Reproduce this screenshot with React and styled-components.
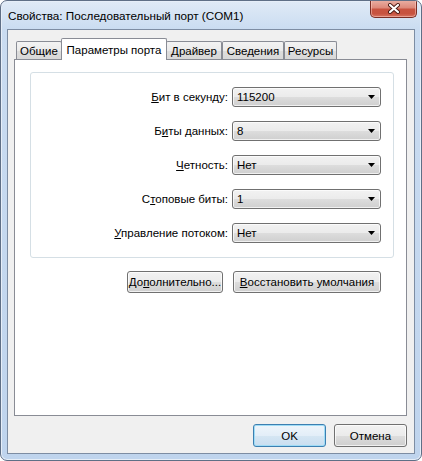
import React from 'react';
import styled, { createGlobalStyle } from 'styled-components';

const GlobalStyle = createGlobalStyle`
  html, body {
    margin: 0;
    padding: 0;
    background: #ffffff;
  }
  body {
    font-family: "Liberation Sans", Arial, sans-serif;
    font-size: 11.5px;
    color: #000000;
  }
`;

const tabs = [
  { label: 'Общие', width: 46 },
  { label: 'Параметры порта', width: 106, active: true },
  { label: 'Драйвер', width: 56 },
  { label: 'Сведения', width: 62 },
  { label: 'Ресурсы', width: 53 },
];

const settings = [
  { key: 'Б', rest: 'ит в секунду:', value: '115200' },
  { pre: 'Б', key: 'и', rest: 'ты данных:', value: '8' },
  { key: 'Ч', rest: 'етность:', value: 'Нет' },
  { pre: 'С', key: 'т', rest: 'оповые биты:', value: '1' },
  { key: 'У', rest: 'правление потоком:', value: 'Нет' },
];

const CloseIcon = () => (
  <svg width="14" height="11" viewBox="0 0 14 11">
    <path d="M3 2 L11 9 M11 2 L3 9" stroke="#4a1a14" strokeWidth="4" strokeLinecap="round" />
    <path d="M3 2 L11 9 M11 2 L3 9" stroke="#ffffff" strokeWidth="2.2" strokeLinecap="round" />
  </svg>
);

const Arrow = () => (
  <svg width="7" height="4" viewBox="0 0 7 4">
    <path d="M0 0 H7 L3.5 4 Z" fill="#000000" />
  </svg>
);

const App = () => {
  return (
    <>
      <GlobalStyle />
      <Window>
        <TitleBar>
          <Title>Свойства: Последовательный порт (COM1)</Title>
          <CloseButton>
            <CloseIcon />
          </CloseButton>
        </TitleBar>
        <Client>
          <TabStrip>
            {tabs.map((tab) => (
              <Tab key={tab.label} $active={tab.active} $width={tab.width}>
                {tab.label}
              </Tab>
            ))}
          </TabStrip>
          <Panel>
            <GroupBox>
              {settings.map((row) => (
                <React.Fragment key={row.rest}>
                  <FieldLabel>
                    {row.pre}<u>{row.key}</u>{row.rest}
                  </FieldLabel>
                  <Combo>
                    <span>{row.value}</span>
                    <Arrow />
                  </Combo>
                </React.Fragment>
              ))}
            </GroupBox>
            <PanelButtons>
              <Button $width={96}>До<u>п</u>олнительно...</Button>
              <Button $width={148}><u>В</u>осстановить умолчания</Button>
            </PanelButtons>
          </Panel>
          <DialogButtons>
            <Button $width={73} $height={23} $default>OK</Button>
            <Button $width={73} $height={23}>Отмена</Button>
          </DialogButtons>
        </Client>
      </Window>
    </>
  );
};

const Window = styled.div`
  width: 422px;
  height: 461px;
  box-sizing: border-box;
  display: flex;
  flex-direction: column;
  padding-bottom: 6px;
  border: 1px solid #5f6f86;
  border-radius: 7px;
  background: linear-gradient(180deg, #e0eaf6 0px, #cadcf1 28px, #bfd4ed 100%);
  box-shadow: inset 0 0 0 1px #e6eef8;
  overflow: hidden;
`;

const TitleBar = styled.div`
  height: 28px;
  flex: 0 0 28px;
  display: flex;
  justify-content: space-between;
  align-items: flex-start;
  padding: 0 4px 0 7px;
`;

const Title = styled.div`
  font-family: "Liberation Sans", Arial, sans-serif;
  font-size: 11.7px;
  line-height: 28px;
  color: #000000;
  margin-top: 1px;
`;

const CloseButton = styled.div`
  width: 47px;
  height: 18px;
  margin-top: -1px;
  box-sizing: border-box;
  display: flex;
  align-items: center;
  justify-content: center;
  border: 1px solid #7a2e25;
  border-top: none;
  border-radius: 0 0 5px 5px;
  background: linear-gradient(180deg, #eab1a5 0%, #dd8a7b 45%, #c85340 55%, #c7533f 80%, #d67462 100%);
  box-shadow: inset 0 0 0 1px rgba(255, 210, 200, 0.5);
`;

const Client = styled.div`
  flex: 1;
  margin: 0 6px;
  display: flex;
  flex-direction: column;
  padding: 8px 7px 0 6px;
  border: 1px solid #7d8da3;
  background: #f0f0f0;
`;

const TabStrip = styled.div`
  display: flex;
  align-items: flex-end;
  height: 21px;
  padding-left: 2px;
`;

const Tab = styled.div`
  position: relative;
  z-index: ${(props) => (props.$active ? 2 : 1)};
  box-sizing: border-box;
  width: ${(props) => props.$width}px;
  height: ${(props) => (props.$active ? 22 : 18)}px;
  margin: ${(props) => (props.$active ? '0 -1px -1px' : '0')};
  display: flex;
  align-items: center;
  justify-content: center;
  padding-top: ${(props) => (props.$active ? 0 : 1)}px;
  border: 1px solid #898c95;
  border-bottom: none;
  border-radius: 2px 2px 0 0;
  background: ${(props) =>
    props.$active ? '#ffffff' : 'linear-gradient(180deg, #f3f3f3 0%, #ebebeb 50%, #dedede 51%, #d8d8d8 100%)'};
  white-space: nowrap;
`;

const Panel = styled.div`
  height: 357px;
  box-sizing: border-box;
  border: 1px solid #898c95;
  background: #ffffff;
  padding: 12px 12px 0 15px;
`;

const GroupBox = styled.div`
  display: grid;
  grid-template-columns: 1fr 149px;
  column-gap: 4px;
  row-gap: 14px;
  align-items: center;
  padding: 14px 12px;
  border: 1px solid #d5dfe5;
  border-radius: 3px;
`;

const FieldLabel = styled.div`
  justify-self: end;
  white-space: nowrap;
`;

const Combo = styled.div`
  height: 20px;
  box-sizing: border-box;
  display: flex;
  align-items: center;
  justify-content: space-between;
  padding: 0 5px 0 4px;
  border: 1px solid #707070;
  border-radius: 3px;
  background: linear-gradient(180deg, #f2f2f2 0%, #ebebeb 50%, #dddddd 51%, #cfcfcf 100%);
  box-shadow: inset 0 0 0 1px rgba(255, 255, 255, 0.7);
`;

const PanelButtons = styled.div`
  display: flex;
  justify-content: flex-end;
  gap: 10px;
  margin-top: 13px;
  padding-right: 13px;
`;

const DialogButtons = styled.div`
  display: flex;
  justify-content: flex-end;
  gap: 8px;
  margin-top: 8px;
`;

const Button = styled.div`
  width: ${(props) => props.$width}px;
  height: ${(props) => props.$height || 22}px;
  box-sizing: border-box;
  display: flex;
  align-items: center;
  justify-content: center;
  white-space: nowrap;
  border: 1px solid ${(props) => (props.$default ? '#3c7fb1' : '#707070')};
  border-radius: 3px;
  background: ${(props) =>
    props.$default
      ? 'linear-gradient(180deg, #eef5fb 0%, #e3eef8 50%, #d5e6f3 51%, #c9def0 100%)'
      : 'linear-gradient(180deg, #f2f2f2 0%, #ebebeb 50%, #dddddd 51%, #cfcfcf 100%)'};
  box-shadow: ${(props) =>
    props.$default ? 'inset 0 0 0 1px #9fdcf6' : 'inset 0 0 0 1px rgba(255, 255, 255, 0.7)'};
`;

export default App;
